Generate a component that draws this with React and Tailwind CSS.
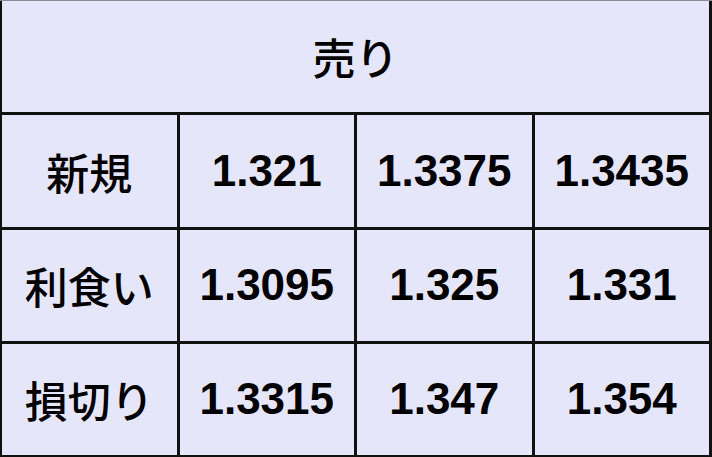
import React from 'react';

const rows = [
  { label: '新規', values: ['1.321', '1.3375', '1.3435'] },
  { label: '利食い', values: ['1.3095', '1.325', '1.331'] },
  { label: '損切り', values: ['1.3315', '1.347', '1.354'] },
];

const cell = 'bg-[#e6e6fa] flex items-center justify-center text-black';
const jp = "font-['Noto_Sans_CJK_JP','Liberation_Sans',sans-serif] text-[43px] font-medium";
const num = "font-['Liberation_Sans',Arial,sans-serif] text-[44px] font-bold";

export default function App() {
  return (
    <div className="w-[712px] h-[457px] bg-[#111] border-t border-t-[#8a8a96] pl-[2px] pr-[3px] pb-[2px] grid grid-cols-4 grid-rows-4 gap-[3px]">
      {/* Header */}
      <div className={`col-span-4 ${cell} ${jp}`}>売り</div>

      {rows.map((row) => (
        <React.Fragment key={row.label}>
          <div className={`${cell} ${jp}`}>{row.label}</div>
          {row.values.map((v, i) => (
            <div key={i} className={`${cell} ${num}`}>
              {v}
            </div>
          ))}
        </React.Fragment>
      ))}
    </div>
  );
}
